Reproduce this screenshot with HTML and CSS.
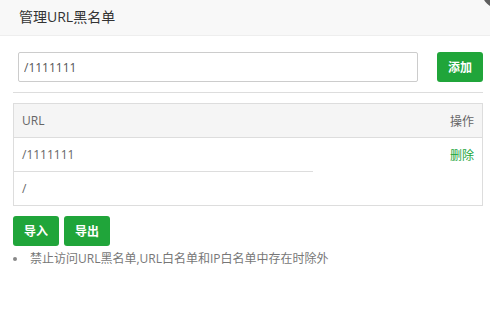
FILE: index.html
```html
<!DOCTYPE html>
<html lang="zh-CN">
<head>
    <meta charset="UTF-8">
    <title>管理URL黑名单</title>
    <link rel="stylesheet" href="styles.css">
</head>
<body>
    <div class="layer">
        <div class="layer-title">管理URL黑名单</div>
        <span class="layer-close"></span>
        <div class="layer-content">
            <div class="add-row">
                <input class="url-input" type="text" value="/1111111">
                <button class="btn btn-add">添加</button>
            </div>
            <div class="divider"></div>
            <table class="url-table">
                <thead>
                    <tr>
                        <th class="col-url">URL</th>
                        <th class="col-op">操作</th>
                    </tr>
                </thead>
                <tbody>
                    <tr>
                        <td class="col-url">/1111111</td>
                        <td class="col-op"><a class="link-del" href="#">删除</a></td>
                    </tr>
                    <tr>
                        <td class="col-url">/</td>
                    </tr>
                </tbody>
            </table>
            <div class="btn-row">
                <button class="btn">导入</button>
                <button class="btn">导出</button>
            </div>
            <ul class="help">
                <li>禁止访问URL黑名单,URL白名单和IP白名单中存在时除外</li>
            </ul>
        </div>
    </div>
</body>
</html>
```

FILE: styles.css
```css
body {
    margin: 0;
    background: #fff;
    font-family: "Open Sans", "Noto Sans CJK SC", sans-serif;
    font-size: 12px;
    color: #555;
}
.layer {
    position: relative;
    width: 490px;
    height: 312px;
    overflow: hidden;
}
.layer-title {
    height: 35px;
    line-height: 33px;
    padding-left: 19px;
    background: #f8f8f8;
    border-bottom: 1px solid #eee;
    font-size: 14px;
    color: #333;
}
.layer-close {
    position: absolute;
    right: -24px;
    top: -24px;
    width: 32px;
    height: 32px;
    border-radius: 50%;
    background: #5f5f5f;
}
.layer-content {
    padding: 16px 7px 0 13px;
}
.add-row {
    display: flex;
    align-items: center;
}
.url-input {
    box-sizing: border-box;
    width: 400px;
    height: 30px;
    margin: 0 0 0 5px;
    padding: 0 5px;
    border: 1px solid #ccc;
    border-radius: 2px;
    font-family: inherit;
    font-size: 12px;
    color: #555;
    outline: none;
}
.btn {
    width: 46px;
    height: 30px;
    padding: 0;
    border: none;
    border-radius: 3px;
    background: #20a53a;
    color: #fff;
    font-family: inherit;
    font-size: 12px;
    font-weight: bold;
    cursor: pointer;
}
.btn-add {
    margin-left: 19px;
}
.divider {
    height: 1px;
    background: #ddd;
    margin: 10px 0 10px 0;
}
.url-table {
    width: 470px;
    border: 1px solid #ddd;
    border-collapse: separate;
    border-spacing: 0;
    color: #666;
}
.url-table th {
    height: 33px;
    padding: 0 8px;
    background: #f5f5f5;
    font-weight: normal;
    text-align: left;
}
.url-table td {
    height: 33px;
    padding: 0 8px;
    border-top: 1px solid #ddd;
}
.url-table .col-url {
    width: 283px;
}
.url-table .col-op {
    text-align: right;
}
.link-del {
    color: #20a53a;
    text-decoration: none;
}
.btn-row {
    display: flex;
    gap: 5px;
    margin-top: 10px;
}
.help {
    margin: 4px 0 0 0;
    padding: 0;
    list-style: none;
    color: #777;
    line-height: 18px;
}
.help li::before {
    content: "";
    display: inline-block;
    width: 4px;
    height: 4px;
    border-radius: 50%;
    background: #888;
    margin: 0 13px 2px 0;
    vertical-align: middle;
}
```
